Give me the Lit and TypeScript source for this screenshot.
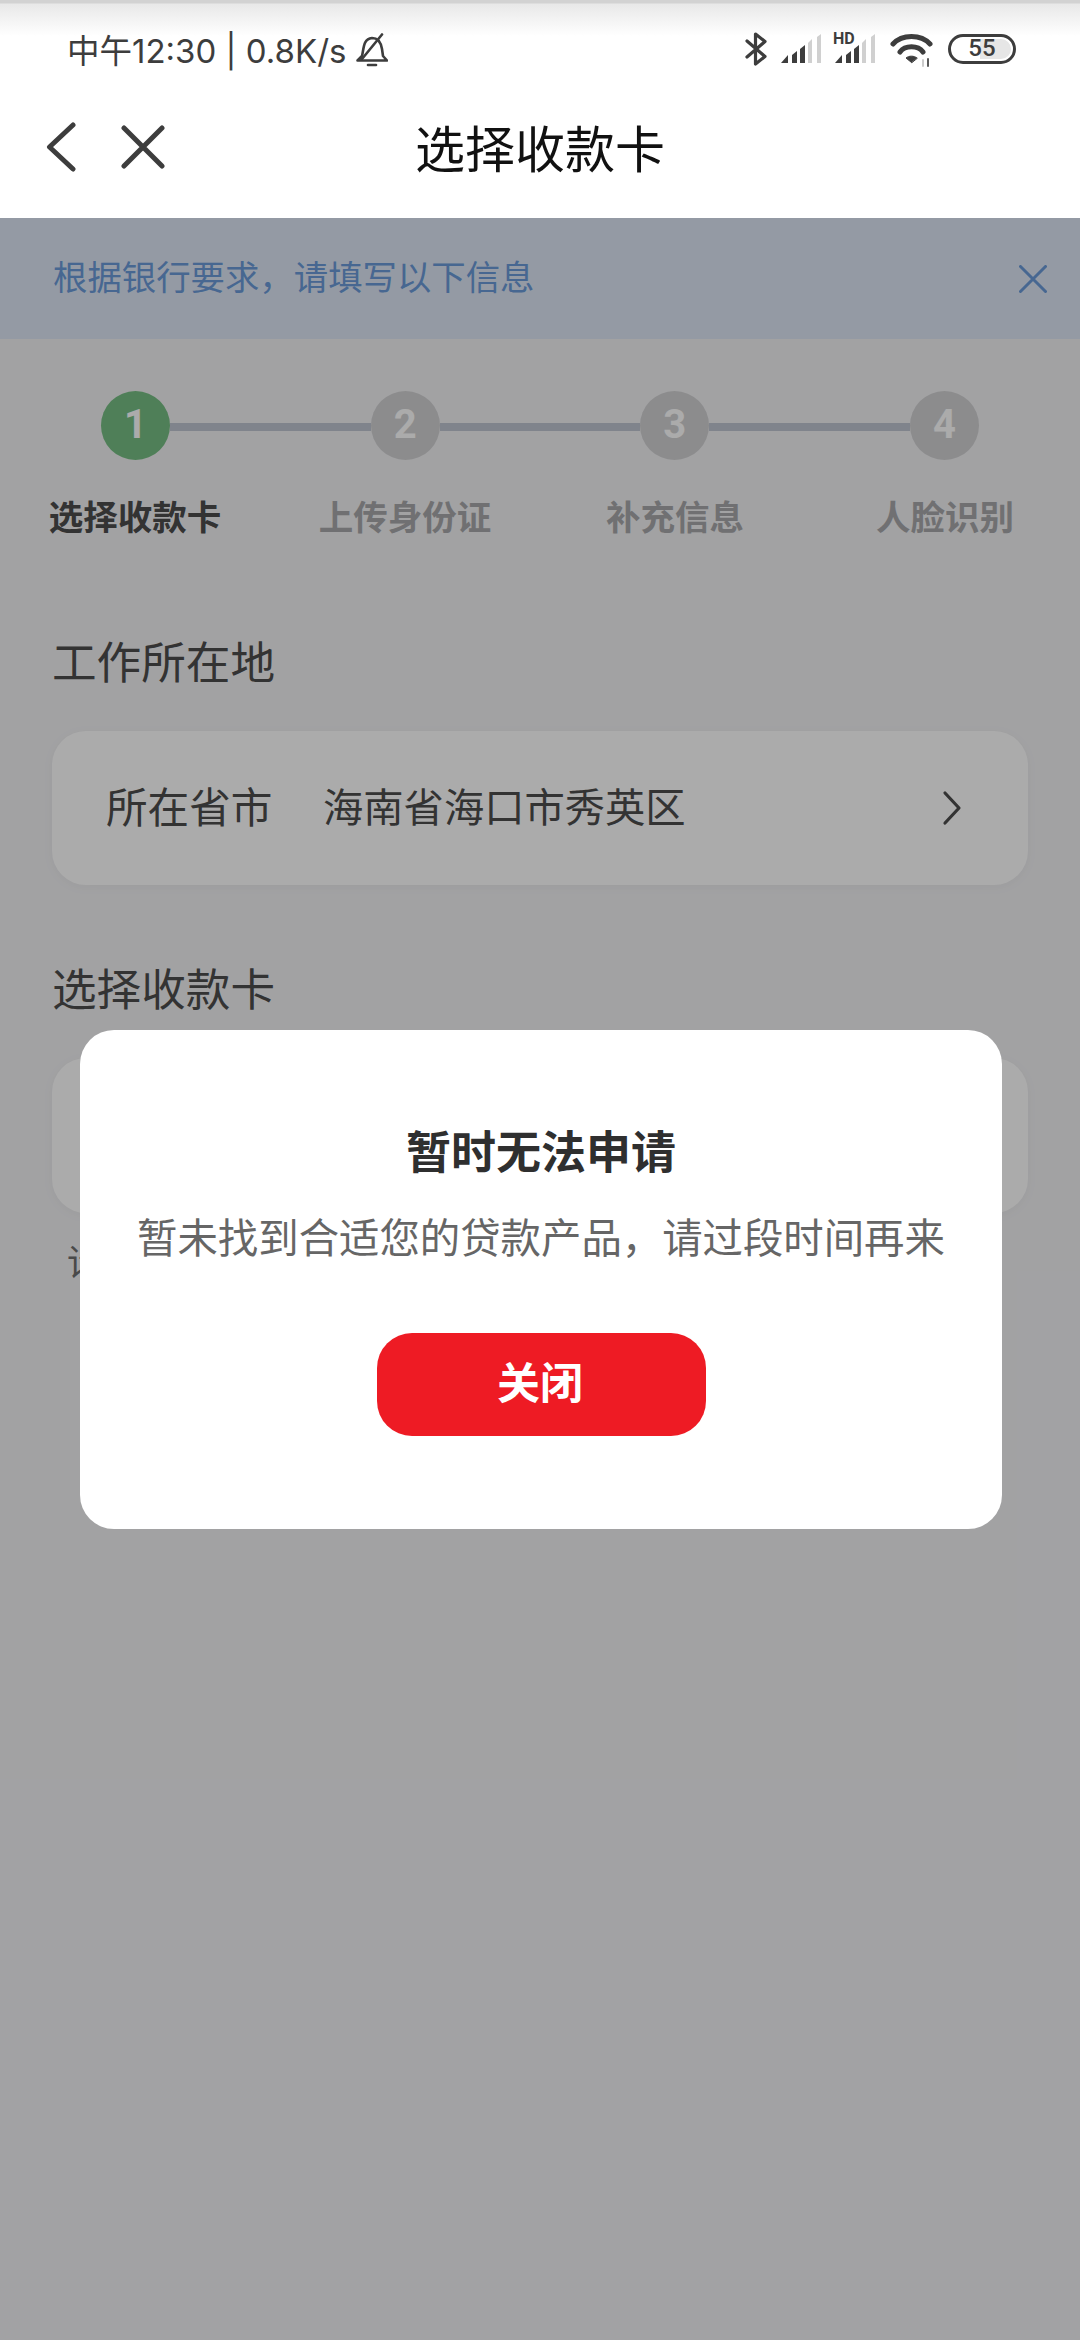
import { LitElement, html, css, svg } from "lit";
import { customElement } from "lit/decorators.js";

const bars = (dark: number) => {
  const b = [
    [0, 7, 21, 26],
    [11, 16, 17, 21],
    [19, 24, 11, 15],
    [27, 31, 5, 9],
    [36, 40, 0, 3],
  ];
  return b.map(
    ([x1, x2, t1, t2], i) =>
      svg`<polygon points="${x1},${i === 0 ? 29 : t2} ${x2},${t1} ${x2},29 ${x1},29" fill="${i < dark ? "#3d3d3d" : "#d0d0d0"}"/>`
  );
};

@customElement("app-root")
export class AppRoot extends LitElement {
  static styles = css`
    :host {
      display: block;
      position: relative;
      width: 1080px;
      height: 2340px;
      overflow: hidden;
      background: #f2f2f4;
      font-family: "Noto Sans CJK SC", "Noto Sans", sans-serif;
    }
    .top { background: #fff; height: 218px; box-sizing: border-box; position: relative; }
    .grad { position: absolute; left: 0; right: 0; top: 0; height: 36px;
      background: linear-gradient(#d2d2d2 0, #d2d2d2 3px, #e8e8e8 4px, #fff 100%); }
    .status { position: relative; height: 72px; padding: 32px 64px 0 67px; box-sizing: border-box;
      display: flex; align-items: flex-start; color: #3d3d3d; }
    .clock { font: 400 33px/34px Inter, "Noto Sans CJK SC", sans-serif; height: 34px; white-space: pre; }
    .clock .cjk { font-family: "Noto Sans CJK SC", sans-serif; font-size: 32.5px; }
    .bell { margin: 1px 0 0 10px; }
    .sp { flex: 1; }
    .icons { display: flex; align-items: flex-start; }
    .bt { display: block; }
    .sig { margin: 2px 0 0 14px; }
    .hd { position: relative; width: 42px; height: 32px; margin-left: 12px; }
    .hd svg { position: absolute; left: 2px; top: 2px; }
    .hd span { position: absolute; left: 0; top: 0; font: 700 16px/13px Roboto, sans-serif; color: #3d3d3d; }
    .wifi { margin: 2px 0 0 15px; }
    .batt { position: relative; margin: 2px 0 0 14px; width: 68px; height: 30px; box-sizing: border-box;
      border: 3.5px solid #3d3d3d; border-radius: 15px; background: #fff;
      font: 500 24px/23px Roboto, sans-serif; text-align: center; color: #3d3d3d; }
    .batt i { position: absolute; right: 2px; top: 2px; bottom: 2px; width: 31px; background: #e6e6e6; border-radius: 0 10px 10px 0; }
    .batt b { position: relative; font-weight: 500; }
    .nav { height: 146px; display: grid; grid-template-columns: 1fr auto 1fr; align-items: center; position: relative; }
    .nav-ic { display: flex; align-items: center; padding-left: 46px; gap: 45px; margin-top: 3px; }
    .title { font-size: 50px; color: #111; line-height: 60px; margin-top: 1px; }
    .banner { height: 121px; background: #dde6f5; display: flex; align-items: center; justify-content: space-between;
      padding: 0 33px 7px 53px; box-sizing: border-box; color: #6a9ad8; font-size: 34.4px; }
    .banner svg { margin-top: 7px; }
    .steps { display: flex; align-items: center; padding: 52px 101px 0; }
    .circle { width: 69px; height: 69px; border-radius: 50%; background: #d1d1d3; color: #fff; flex: none;
      display: flex; align-items: center; justify-content: center;
      font: 700 40px/65px Roboto, sans-serif; }
    .circle span { display: block; margin-top: -3px; }
    .circle.on { background: #76be83; }
    .line { flex: 1; height: 8px; margin-top: 3px; background: #bfc5d1; }
    .labels { display: grid; grid-template-columns: repeat(4, 270px); margin-top: 30px; }
    .label { font-size: 34.5px; font-weight: 700; line-height: 50px; text-align: center; color: #a8a8aa; }
    .label.on { color: #4c4c4c; }
    .sec { font-size: 44.6px; line-height: 60px; color: #4d4d4d; padding-left: 52px; }
    .s1 { margin-top: 90px; }
    .s2 { margin-top: 72px; }
    .card { margin: 41px 52px 0; height: 154px; border-radius: 34px; background: #fff;
      box-shadow: 0 2px 12px rgba(0,0,0,.04); display: flex; align-items: center; padding: 0 66px 0 54px;
      box-sizing: border-box; color: #4d4d4d; font-size: 41.6px; }
    .card .k { width: 217px; padding-bottom: 7px; }
    .card .v { flex: 1; font-size: 40.3px; padding-bottom: 7px; }
    .card.c2 { margin-top: 41px; height: 155px; }
    .hint { margin: 22px 0 0 67px; font-size: 36px; line-height: 50px; color: #6f6f6f; }
    .overlay { position: absolute; left: 0; right: 0; top: 218px; bottom: 0; background: rgba(0,0,0,.33);
      padding: 812px 78px 0 80px; box-sizing: border-box; }
    .modal { background: #fff; height: 499px; border-radius: 34px; display: flex; flex-direction: column; align-items: center; }
    .m-title { font-size: 45px; font-weight: 700; line-height: 60px; color: #2f2f2f; margin-top: 90px; }
    .m-text { font-size: 40.4px; line-height: 58px; color: #666; margin-top: 27px; white-space: nowrap; }
    .btn { margin-top: 68px; width: 329px; height: 103px; border-radius: 35px; background: #ee1b24; color: #fff;
      font-size: 43px; font-weight: 700; display: flex; align-items: center; justify-content: center; padding: 0 2px 10px 0; box-sizing: border-box; }
  `;

  render() {
    const steps = ["选择收款卡", "上传身份证", "补充信息", "人脸识别"];
    return html`
      <div class="top">
        <div class="grad"></div>
        <div class="status">
          <span class="clock"><span class="cjk">中午</span>12:30 | 0.8K/s</span>
          <svg class="bell" width="32" height="34" viewBox="0 0 32 34" fill="none" stroke="#3d3d3d" stroke-width="2.6" stroke-linecap="round" stroke-linejoin="round">
            <path d="M1.5 27.5 L6 23 C8 15 7 6 16 5 C23 5 25 10 26 16 L27 23 L31 27.5 Z" />
            <path d="M26 1.5 L6 26" />
            <path d="M12 32 H20" />
          </svg>
          <div class="sp"></div>
          <div class="icons">
            <svg class="bt" width="22" height="34" viewBox="0 0 22 34" fill="none" stroke="#3d3d3d" stroke-width="3.2" stroke-linejoin="round" stroke-linecap="round">
              <path d="M2 9 L20 24.5 L10.5 32 V2 L20 9.5 L2 25" />
            </svg>
            <svg class="sig" width="40" height="29" viewBox="0 0 40 29">${bars(3)}</svg>
            <div class="hd">
              <svg width="40" height="29" viewBox="0 0 40 29">${bars(3)}</svg>
              <span>HD</span>
            </div>
            <svg class="wifi" width="44" height="34" viewBox="0 0 44 34" fill="none" stroke="#3d3d3d" stroke-width="5" stroke-linecap="round">
              <path d="M3 10 C12 0 31 0 40 10" />
              <path d="M10 18 C15 11 28 11 33 18" />
              <path d="M21.5 28.5 L16 24 C19 21.5 24 21.5 27 24 Z" fill="#3d3d3d" stroke-width="1" stroke-linejoin="round" />
              <path d="M38 25 V32" stroke="#5a5a5a" stroke-width="2" />
              <path d="M33 26 V32" stroke="#ccc" stroke-width="2" />
            </svg>
            <div class="batt"><i></i><b>55</b></div>
          </div>
        </div>
        <div class="nav">
          <div class="nav-ic">
            <svg width="30" height="50" viewBox="0 0 30 50" fill="none" stroke="#3d3d3d" stroke-width="5" stroke-linecap="round" stroke-linejoin="round"><path d="M27 3 L3.5 25 L27 47"/></svg>
            <svg width="44" height="44" viewBox="0 0 44 44" fill="none" stroke="#3d3d3d" stroke-width="5" stroke-linecap="round"><path d="M3 3 L41 41 M41 3 L3 41"/></svg>
          </div>
          <div class="title">选择收款卡</div>
          <div></div>
        </div>
      </div>
      <div class="banner">
        <span>根据银行要求，请填写以下信息</span>
        <svg width="28" height="28" viewBox="0 0 28 28" fill="none" stroke="#6a9ad8" stroke-width="3" stroke-linecap="round"><path d="M1.5 1.5 L26.5 26.5 M26.5 1.5 L1.5 26.5"/></svg>
      </div>
      <div class="steps">
        ${steps.map(
          (_, i) => html`${i ? html`<div class="line"></div>` : ""}<div class="circle ${i === 0 ? "on" : ""}"><span>${i + 1}</span></div>`
        )}
      </div>
      <div class="labels">
        ${steps.map((s, i) => html`<div class="label ${i === 0 ? "on" : ""}">${s}</div>`)}
      </div>
      <div class="sec s1">工作所在地</div>
      <div class="card">
        <span class="k">所在省市</span>
        <span class="v">海南省海口市秀英区</span>
        <svg width="20" height="36" viewBox="0 0 20 36" fill="none" stroke="#4d4d4d" stroke-width="3.2" stroke-linecap="round" stroke-linejoin="round"><path d="M3 3 L17 18 L3 33"/></svg>
      </div>
      <div class="sec s2">选择收款卡</div>
      <div class="card c2"></div>
      <div class="hint">请</div>
      <div class="overlay">
        <div class="modal">
          <div class="m-title">暂时无法申请</div>
          <div class="m-text">暂未找到合适您的贷款产品，请过段时间再来</div>
          <div class="btn">关闭</div>
        </div>
      </div>
    `;
  }
}
